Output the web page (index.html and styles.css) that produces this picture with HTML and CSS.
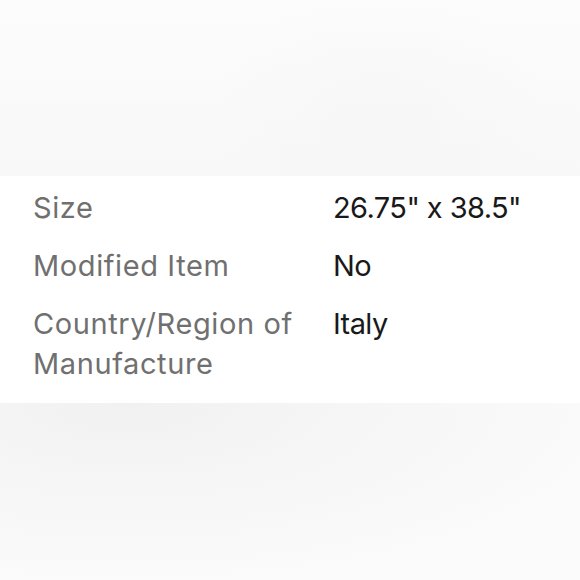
FILE: index.html
```html
<!DOCTYPE html>
<html>
<head>
<meta charset="utf-8">
<link rel="stylesheet" href="styles.css">
</head>
<body>
<div class="page">
  <div class="top-fade"></div>
  <section class="specs">
    <div class="row">
      <div class="label">Size</div>
      <div class="value">26.75" x 38.5"</div>
    </div>
    <div class="row">
      <div class="label">Modified Item</div>
      <div class="value">No</div>
    </div>
    <div class="row">
      <div class="label">Country/Region of Manufacture</div>
      <div class="value">Italy</div>
    </div>
  </section>
  <div class="bottom-fade"></div>
</div>
</body>
</html>
```
FILE: styles.css
```css
html, body {
  margin: 0;
  padding: 0;
  width: 580px;
  height: 580px;
  overflow: hidden;
}
body {
  font-family: Inter, "Open Sans", sans-serif;
}
.page {
  display: flex;
  flex-direction: column;
  height: 580px;
}
.top-fade {
  height: 176px;
  flex: none;
  background:
    radial-gradient(ellipse 180px 150px at 380px 140px, #f7f7f8 0%, rgba(247,247,248,0) 100%),
    linear-gradient(180deg, #fcfcfc 0%, #f8f8f8 100%);
}
.specs {
  background: #ffffff;
  padding: 12px 0 19px 33px;
  display: flex;
  flex-direction: column;
  gap: 18px;
}
.row {
  display: grid;
  grid-template-columns: 300px 1fr;
  font-size: 29px;
  line-height: 40px;
}
.label {
  color: #707070;
  width: 295px;
  letter-spacing: 0.6px;
}
.value {
  color: #191919;
  letter-spacing: -0.6px;
}
.bottom-fade {
  flex: 1;
  background:
    radial-gradient(ellipse 520px 190px at 130px 0px, #f1f1f1 0%, #f6f6f6 45%, #fbfbfb 100%);
}
```
